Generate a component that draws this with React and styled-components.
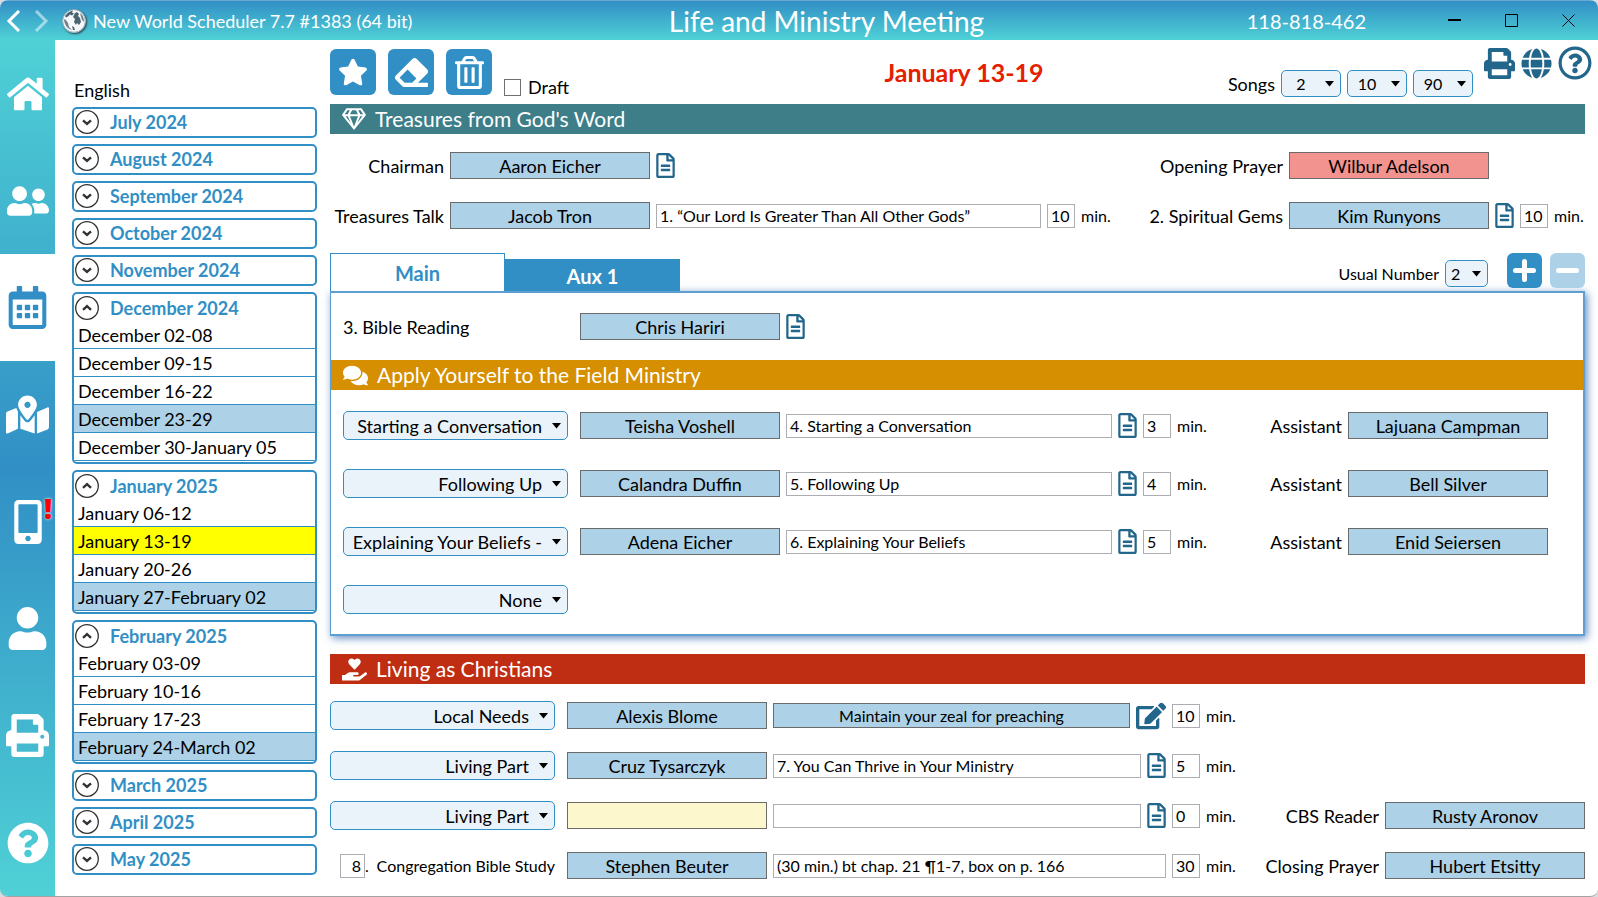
import React from "react";
import {useState} from "react";
import styled, {createGlobalStyle, css} from "styled-components";
import {
  FaComments,
  FaEdit,
  FaEraser,
  FaGlobe,
  FaHandHoldingHeart,
  FaHome,
  FaMapMarkedAlt,
  FaMobileAlt,
  FaPrint,
  FaQuestionCircle,
  FaRegCalendarAlt,
  FaRegFileAlt,
  FaRegGem,
  FaRegQuestionCircle,
  FaRegTrashAlt,
  FaStar,
  FaUser,
  FaUserFriends,
} from "react-icons/fa";

const blue = '#318fc5'
const aqua = '#4fd1d6'
const pale = '#add1e7'
const navy = '#22668c'

const GlobalStyle = createGlobalStyle`
  * {
    box-sizing: border-box;
  }

  body {
    margin: 0;
    background: #d9dcdf;
    font-family: Lato, "Liberation Sans", sans-serif;
    font-size: 18px;
    line-height: 20px;
    color: #000;
  }

  button, input, select {
    margin: 0;
    font: inherit;
    color: inherit;
  }

  button {
    padding: 0;
    border: 0;
    background: none;
    cursor: pointer;
  }

  svg {
    display: block;
  }
`

const Window = styled.div`
  display: flex;
  flex-direction: column;
  min-height: 100vh;
  overflow: hidden;
  border-bottom: 1px solid #a3a3a3;
  border-radius: 8px;
  background: #fff;
`

const TitleBar = styled.header`
  display: grid;
  grid-template-columns: 1fr auto 1fr;
  align-items: center;
  height: 40px;
  padding: 0 23px 0 6px;
  background: linear-gradient(${blue}, ${aqua});
  border-top: 1px solid #6aa9d0;
  color: #fff;
`

const TitleLeft = styled.div`
  display: flex;
  align-items: center;
`

const NavArrow = styled.button`
  width: 28px;
  opacity: ${(props) => props.$faded ? 0.5 : 1};
`

const Logo = styled.span`
  margin-right: 7px;
  border-radius: 50%;
  box-shadow: 1px 1px 2px #33414c;
`

const Title = styled.h1`
  margin: 0;
  padding-left: 72px;
  font-size: 28px;
  line-height: 32px;
  font-weight: 400;
`

const TitleRight = styled.div`
  display: flex;
  align-items: center;
  justify-content: flex-end;
  gap: 44px;
  font-size: 20px;
`

const Licence = styled.span`
  margin-right: 38px;
`

const WindowButton = styled.button`
  width: 13px;
  color: #000;
`

const Body = styled.div`
  display: flex;
  flex: 1;
`

const Rail = styled.nav`
  display: flex;
  flex-direction: column;
  flex: 0 0 55px;
  background: linear-gradient(${aqua}, ${blue} 50%, ${aqua});
`

const RailButton = styled.button`
  position: relative;
  display: flex;
  flex: 1;
  align-items: center;
  justify-content: center;
  background: ${(props) => props.$active ? '#fff' : 'transparent'};
  color: ${(props) => props.$active ? blue : '#fff'};
`

const Alert = styled.span`
  position: absolute;
  top: 26px;
  right: 3px;
  color: #f00;
  font-family: "Open Sans", sans-serif;
  font-size: 28px;
  line-height: 28px;
  font-weight: 800;
  text-shadow: 0 0 3px #fff;
`

const Sidebar = styled.aside`
  display: flex;
  flex-direction: column;
  gap: 6px;
  flex: 0 0 245px;
  margin: 40px 13px 0 17px;
`

const Language = styled.div`
  height: 21px;
  padding-left: 2px;
`

const Month = styled.section`
  overflow: hidden;
  border: 2px solid ${blue};
  border-radius: 5px;
  padding-bottom: 1px;
`

const MonthHeader = styled.button`
  display: flex;
  align-items: center;
  gap: 11px;
  width: 100%;
  height: ${(props) => props.$open ? 27 : 26}px;
  padding-left: 1px;
  color: ${blue};
  font-weight: 700;
`

const Week = styled.button`
  display: block;
  width: 100%;
  height: 28px;
  padding-left: 4px;
  border-bottom: 1px solid ${blue};
  text-align: left;
  background: ${(props) => props.$current ? '#ff0' : props.$marked ? pale : '#fff'};
`

const Main = styled.main`
  flex: 1;
  min-width: 0;
  padding-right: 13px;
`

const Toolbar = styled.div`
  display: grid;
  grid-template-columns: 1fr auto 1fr;
  height: 64px;
  margin-right: -13px;
`

const Actions = styled.div`
  display: flex;
  align-items: center;
  gap: 12px;
`

const ActionButton = styled.button`
  display: flex;
  align-items: center;
  justify-content: center;
  width: ${(props) => props.$small ? 35 : 46}px;
  height: ${(props) => props.$small ? 35 : 46}px;
  border-radius: 6px;
  background: ${blue};
  color: #fff;

  &:disabled {
    background: ${pale};
  }
`

const Draft = styled.label`
  display: flex;
  align-items: center;
  align-self: flex-end;
  gap: 7px;
  margin-bottom: 7px;
`

const Checkbox = styled.input`
  appearance: none;
  width: 17px;
  height: 17px;
  border: 1px solid #707070;
  background: #fff;
`

const WeekTitle = styled.h2`
  align-self: center;
  margin: 0;
  font-size: 25px;
  line-height: 30px;
  font-weight: 700;
  color: #e52000;
`

const ToolbarRight = styled.div`
  display: flex;
  justify-content: flex-end;
  padding-right: 6px;
`

const Songs = styled.div`
  display: flex;
  align-items: center;
  align-self: flex-end;
  gap: 6px;
  margin: 0 11px 7px 0;
`

const Shortcuts = styled.div`
  display: flex;
  align-items: center;
  gap: 6px;
  height: 34px;
  margin-top: 6px;
  color: ${navy};
`

const IconButton = styled.button`
  flex: none;
  color: ${navy};
`

const Banner = styled.h3`
  display: flex;
  align-items: center;
  gap: 9px;
  height: 30px;
  margin: 0;
  padding-left: 12px;
  background: ${(props) => props.$color};
  color: #fff;
  font-size: 21px;
  line-height: 24px;
  font-weight: 400;
`

const Treasures = styled.div`
  display: grid;
  grid-template-columns: 114px 200px minmax(0, 1fr) 165px 200px 90px;
  align-items: center;
  gap: 23px 6px;
  padding: 18px 0 24px;
`

const Label = styled.label`
  text-align: right;
  white-space: nowrap;
`

const Cell = styled.div`
  display: flex;
  align-items: center;
  gap: 6px;
`

const boxColors = {assigned: pale, conflict: '#f2938f', empty: '#fdf7cd'}

const Person = styled.button`
  flex: 0 0 200px;
  height: 27px;
  border: 1px solid #6b6b6b;
  background: ${(props) => boxColors[props.$state || 'assigned']};
`

const Topic = styled.button`
  flex: 1;
  height: 25px;
  border: 1px solid #6b6b6b;
  background: ${pale};
  font-size: 16px;
`

const fieldStyle = css`
  height: 24px;
  padding: 0 3px;
  border: 1px solid #abadb3;
  background: #fff;
  font-size: 16px;
`

const TextField = styled.input`
  ${fieldStyle}
  flex: 1;
  min-width: 0;
`

const NumberField = styled.input`
  ${fieldStyle}
  flex: none;
  width: ${(props) => props.$right ? 25 : 28}px;
  text-align: ${(props) => props.$right ? 'right' : 'left'};
`

const Minutes = styled.span`
  flex: none;
  width: 31px;
  font-size: 16px;
`

const SelectBox = styled.div`
  display: grid;
  flex: none;
  align-items: center;
  width: ${(props) => props.$width}px;
  height: ${(props) => props.$tall ? 29 : 27}px;

  > * {
    grid-area: 1 / 1;
  }

  > svg {
    justify-self: end;
    margin-right: 7px;
    pointer-events: none;
  }
`

const SelectInput = styled.select`
  appearance: none;
  width: 100%;
  height: 100%;
  padding: 0 25px 0 5px;
  border: 1px solid ${blue};
  border-radius: 5px;
  background: #eaf3f9;
  font-size: ${(props) => props.$tall ? 18 : 16}px;
  text-align-last: ${(props) => props.$align};
`

const TabBar = styled.div`
  position: relative;
  z-index: 1;
  display: flex;
  align-items: flex-end;
  height: 38px;
`

const Tab = styled.button`
  width: 175px;
  height: ${(props) => props.$active ? 38 : 32}px;
  border: 1px solid ${blue};
  border-bottom: 0;
  background: ${(props) => props.$active ? '#fff' : blue};
  color: ${(props) => props.$active ? blue : '#fff'};
  font-size: 20px;
  font-weight: 700;
`

const UsualNumber = styled.div`
  display: flex;
  align-items: center;
  gap: 6px;
  margin: 0 19px 4px auto;
  font-size: 16px;
`

const TabActions = styled.div`
  display: flex;
  align-self: flex-start;
  gap: 8px;
`

const Panel = styled.div`
  margin-bottom: 18px;
  border: 2px solid #5c9fd0;
  border-left-width: 1px;
  box-shadow: 2px 2px 8px rgba(45, 97, 168, 0.75);
  background: #fff;
`

const Reading = styled.div`
  display: flex;
  align-items: center;
  gap: 6px;
  padding: 20px 12px;
`

const ReadingLabel = styled.label`
  width: 231px;
`

const Rows = styled.div`
  display: flex;
  flex-direction: column;
  gap: ${(props) => props.$inset ? 29 : 21}px;
  padding: ${(props) => props.$inset ? '21px 35px 20px 12px' : '17px 0 16px'};
`

const Row = styled.div`
  display: flex;
  align-items: center;
  gap: 6px;
  height: 29px;

  > ${SelectBox} {
    margin-right: 6px;
  }
`

const AssistantLabel = styled(Label)`
  width: 128px;
`

const Side = styled.div`
  display: flex;
  flex: 0 0 342px;
  align-items: center;
  justify-content: flex-end;
  gap: 6px;
`

const StudyLabel = styled.div`
  display: flex;
  flex: 0 0 225px;
  align-items: center;
  margin-right: 6px;
  padding-left: 10px;
  font-size: 16px;

  > label {
    margin-left: auto;
  }
`

const months = [
  {name: 'July 2024'},
  {name: 'August 2024'},
  {name: 'September 2024'},
  {name: 'October 2024'},
  {name: 'November 2024'},
  {
    name: 'December 2024',
    weeks: ['December 02-08', 'December 09-15', 'December 16-22', 'December 23-29', 'December 30-January 05'],
  },
  {
    name: 'January 2025',
    weeks: ['January 06-12', 'January 13-19', 'January 20-26', 'January 27-February 02'],
  },
  {
    name: 'February 2025',
    weeks: ['February 03-09', 'February 10-16', 'February 17-23', 'February 24-March 02'],
  },
  {name: 'March 2025'},
  {name: 'April 2025'},
  {name: 'May 2025'},
]

const markedWeeks = ['December 23-29', 'January 27-February 02', 'February 24-March 02']

const railItems = [
  {name: 'Home', icon: FaHome, size: 42},
  {name: 'People', icon: FaUserFriends, size: 42},
  {name: 'Schedules', icon: FaRegCalendarAlt, size: 43},
  {name: 'Territories', icon: FaMapMarkedAlt, size: 43},
  {name: 'Mobile', icon: FaMobileAlt, size: 44, alert: true},
  {name: 'Account', icon: FaUser, size: 43},
  {name: 'Print', icon: FaPrint, size: 43},
  {name: 'Help', icon: FaQuestionCircle, size: 42},
]

const ministryParts = [
  {type: 'Starting a Conversation', person: 'Teisha Voshell', text: '4. Starting a Conversation', min: 3, assistant: 'Lajuana Campman'},
  {type: 'Following Up', person: 'Calandra Duffin', text: '5. Following Up', min: 4, assistant: 'Bell Silver'},
  {type: 'Explaining Your Beliefs -', person: 'Adena Eicher', text: '6. Explaining Your Beliefs', min: 5, assistant: 'Enid Seiersen'},
]

const Select = ({options, width, tall, align = 'left', ...rest}) => (
  <SelectBox $width={width} $tall={tall}>
    <SelectInput $tall={tall} $align={align} {...rest}>
      {options.map((option) => <option key={option}>{option}</option>)}
    </SelectInput>
    <svg width="9" height="6" viewBox="0 0 9 6"><path d="M0 0h9L4.5 5.5z" /></svg>
  </SelectBox>
)

const Toggle = ({open}) => (
  <svg width="24" height="24" viewBox="0 0 24 24" fill="none" stroke="#333">
    <circle cx="12" cy="12" r="11.3" strokeWidth="1.3" />
    <path d={open ? 'M8 13.8l4-3.6 4 3.6' : 'M8 10.4l4 3.6 4-3.6'} strokeWidth="2.4" />
  </svg>
)

const Note = () => (
  <IconButton aria-label="Notes">
    <svg width="19" height="25" viewBox="0 0 384 512"><FaRegFileAlt size="100%" /></svg>
  </IconButton>
)

const App = () => {
  const [openMonths, setOpenMonths] = useState(['December 2024', 'January 2025', 'February 2025'])
  const [week, setWeek] = useState('January 13-19')
  const [tab, setTab] = useState('Main')

  const toggleMonth = (name) => {
    setOpenMonths(openMonths.includes(name) ? openMonths.filter((m) => m !== name) : [...openMonths, name])
  }

  return (
    <Window>
      <GlobalStyle />
      <TitleBar>
        <TitleLeft>
          <NavArrow aria-label="Back">
            <svg width="15" height="22" viewBox="0 0 15 22" fill="none" stroke="#fff" strokeWidth="3"><path d="M13 1L3 11l10 10" /></svg>
          </NavArrow>
          <NavArrow aria-label="Forward" $faded>
            <svg width="15" height="22" viewBox="0 0 15 22" fill="none" stroke="#fff" strokeWidth="3"><path d="M2 1l10 10L2 21" /></svg>
          </NavArrow>
          <Logo>
            <svg width="24" height="24" viewBox="0 0 24 24">
              <circle cx="12" cy="12" r="11.3" fill="#f6f8f9" stroke="#a9b1b6" />
              <path d="M3 7c2-3 5-5 8-5.500l-1 2 2 1-2 2-2-1-2 2-2 1z" fill="#4b6472" />
              <path d="M2 10l2 1 2 3 1 4 3 3c-4-1-8-5-8-11z" fill="#71858f" />
              <path d="M13 4l2-1 2 2-1 2 2 2 1 4-2 3-2-2-1 2-2-3 1-3-2-2z" fill="#4b6472" />
              <path d="M18 4c3 2 4 5 4 9l-2-2-1-3z" fill="#71858f" />
              <path d="M10 17l2 1 1 3h-2z" fill="#4b6472" />
            </svg>
          </Logo>
          <span>New World Scheduler 7.7 #1383 (64 bit)</span>
        </TitleLeft>
        <Title>Life and Ministry Meeting</Title>
        <TitleRight>
          <Licence>118-818-462</Licence>
          <WindowButton aria-label="Minimize">
            <svg width="13" height="13" viewBox="0 0 13 13"><path d="M0 5h13v2H0z" /></svg>
          </WindowButton>
          <WindowButton aria-label="Maximize">
            <svg width="13" height="13" viewBox="0 0 13 13" fill="none" stroke="#000"><path d="M.5.5h12v12H.5z" /></svg>
          </WindowButton>
          <WindowButton aria-label="Close">
            <svg width="13" height="13" viewBox="0 0 13 13" stroke="#000"><path d="M.5.5l12 12M12.5.5l-12 12" /></svg>
          </WindowButton>
        </TitleRight>
      </TitleBar>
      <Body>
        <Rail>
          {railItems.map(({name, icon: Icon, size, alert}) => (
            <RailButton key={name} aria-label={name} $active={name === 'Schedules'}>
              <Icon size={size} />
              {alert && <Alert>!</Alert>}
            </RailButton>
          ))}
        </Rail>
        <Sidebar>
          <Language>English</Language>
          {months.map(({name, weeks = []}) => {
            const open = openMonths.includes(name)
            return (
              <Month key={name}>
                <MonthHeader $open={open} onClick={() => toggleMonth(name)}>
                  <Toggle open={open} />
                  {name}
                </MonthHeader>
                {open && weeks.map((w) => (
                  <Week key={w} $current={w === week} $marked={markedWeeks.includes(w)} onClick={() => setWeek(w)}>{w}</Week>
                ))}
              </Month>
            )
          })}
        </Sidebar>
        <Main>
          <Toolbar>
            <Actions>
              <ActionButton aria-label="Favorite"><FaStar size={30} /></ActionButton>
              <ActionButton aria-label="Clear"><FaEraser size={33} /></ActionButton>
              <ActionButton aria-label="Delete"><FaRegTrashAlt size={33} /></ActionButton>
              <Draft><Checkbox type="checkbox" />Draft</Draft>
            </Actions>
            <WeekTitle>{week}</WeekTitle>
            <ToolbarRight>
              <Songs>
                <Label htmlFor="song1">Songs</Label>
                <Select id="song1" width={60} options={['2']} align="center" />
                <Select aria-label="Second song" width={60} options={['10']} align="center" />
                <Select aria-label="Third song" width={60} options={['90']} align="center" />
              </Songs>
              <Shortcuts>
                <IconButton aria-label="Print"><FaPrint size={31} /></IconButton>
                <IconButton aria-label="Web"><FaGlobe size={31} /></IconButton>
                <IconButton aria-label="Help"><FaRegQuestionCircle size={34} /></IconButton>
              </Shortcuts>
            </ToolbarRight>
          </Toolbar>

          <Banner $color="#3d7e89"><FaRegGem size={24} />Treasures from God's Word</Banner>
          <Treasures>
            <Label htmlFor="chairman">Chairman</Label>
            <Person id="chairman">Aaron Eicher</Person>
            <Cell><Note /></Cell>
            <Label htmlFor="opening">Opening Prayer</Label>
            <Person id="opening" $state="conflict">Wilbur Adelson</Person>
            <span />
            <Label htmlFor="talk">Treasures Talk</Label>
            <Person id="talk">Jacob Tron</Person>
            <Cell>
              <TextField aria-label="Talk theme" defaultValue="1. “Our Lord Is Greater Than All Other Gods”" />
              <NumberField aria-label="Talk minutes" defaultValue="10" />
              <Minutes>min.</Minutes>
            </Cell>
            <Label htmlFor="gems">2. Spiritual Gems</Label>
            <Person id="gems">Kim Runyons</Person>
            <Cell>
              <Note />
              <NumberField aria-label="Gems minutes" defaultValue="10" />
              <Minutes>min.</Minutes>
            </Cell>
          </Treasures>

          <TabBar>
            <Tab $active={tab === 'Main'} onClick={() => setTab('Main')}>Main</Tab>
            <Tab $active={tab === 'Aux 1'} onClick={() => setTab('Aux 1')}>Aux 1</Tab>
            <UsualNumber>
              <Label htmlFor="usual">Usual Number</Label>
              <Select id="usual" width={43} options={['2']} />
            </UsualNumber>
            <TabActions>
              <ActionButton $small aria-label="Add part">
                <svg width="23" height="23" viewBox="0 0 23 23" stroke="#fff" strokeWidth="5" strokeLinecap="round"><path d="M11.5 2.5v18M2.5 11.5h18" /></svg>
              </ActionButton>
              <ActionButton $small aria-label="Remove part" disabled>
                <svg width="23" height="23" viewBox="0 0 23 23" stroke="#fff" strokeWidth="5" strokeLinecap="round"><path d="M2.5 11.5h18" /></svg>
              </ActionButton>
            </TabActions>
          </TabBar>
          <Panel>
            <Reading>
              <ReadingLabel htmlFor="reading">3. Bible Reading</ReadingLabel>
              <Person id="reading">Chris Hariri</Person>
              <Note />
            </Reading>
            <Banner $color="#d58f00"><FaComments size={25} />Apply Yourself to the Field Ministry</Banner>
            <Rows $inset>
              {ministryParts.map((part) => (
                <Row key={part.type}>
                  <Select aria-label="Part type" width={225} tall align="right" options={[part.type]} />
                  <Person>{part.person}</Person>
                  <TextField aria-label="Part title" defaultValue={part.text} />
                  <Note />
                  <NumberField aria-label="Minutes" defaultValue={part.min} />
                  <Minutes>min.</Minutes>
                  <AssistantLabel htmlFor={`assistant${part.min}`}>Assistant</AssistantLabel>
                  <Person id={`assistant${part.min}`}>{part.assistant}</Person>
                </Row>
              ))}
              <Row>
                <Select aria-label="Part type" width={225} tall align="right" options={['None']} />
              </Row>
            </Rows>
          </Panel>

          <Banner $color="#bf2e13"><FaHandHoldingHeart size={25} />Living as Christians</Banner>
          <Rows>
            <Row>
              <Select aria-label="Part type" width={225} tall align="right" options={['Local Needs']} />
              <Person>Alexis Blome</Person>
              <Topic>Maintain your zeal for preaching</Topic>
              <IconButton aria-label="Edit topic"><FaEdit size={30} /></IconButton>
              <NumberField aria-label="Minutes" defaultValue="10" />
              <Minutes>min.</Minutes>
              <Side />
            </Row>
            <Row>
              <Select aria-label="Part type" width={225} tall align="right" options={['Living Part']} />
              <Person>Cruz Tysarczyk</Person>
              <TextField aria-label="Part title" defaultValue="7. You Can Thrive in Your Ministry" />
              <Note />
              <NumberField aria-label="Minutes" defaultValue="5" />
              <Minutes>min.</Minutes>
              <Side />
            </Row>
            <Row>
              <Select aria-label="Part type" width={225} tall align="right" options={['Living Part']} />
              <Person $state="empty" aria-label="Unassigned" />
              <TextField aria-label="Part title" defaultValue="" />
              <Note />
              <NumberField aria-label="Minutes" defaultValue="0" />
              <Minutes>min.</Minutes>
              <Side>
                <Label htmlFor="reader">CBS Reader</Label>
                <Person id="reader">Rusty Aronov</Person>
              </Side>
            </Row>
            <Row>
              <StudyLabel>
                <NumberField $right aria-label="Part number" defaultValue="8" />.
                <label htmlFor="study">Congregation Bible Study</label>
              </StudyLabel>
              <Person id="study">Stephen Beuter</Person>
              <TextField aria-label="Study material" defaultValue="(30 min.) bt chap. 21 ¶1-7, box on p. 166" />
              <NumberField aria-label="Minutes" defaultValue="30" />
              <Minutes>min.</Minutes>
              <Side>
                <Label htmlFor="closing">Closing Prayer</Label>
                <Person id="closing">Hubert Etsitty</Person>
              </Side>
            </Row>
          </Rows>
        </Main>
      </Body>
    </Window>
  );
}

export default App;
